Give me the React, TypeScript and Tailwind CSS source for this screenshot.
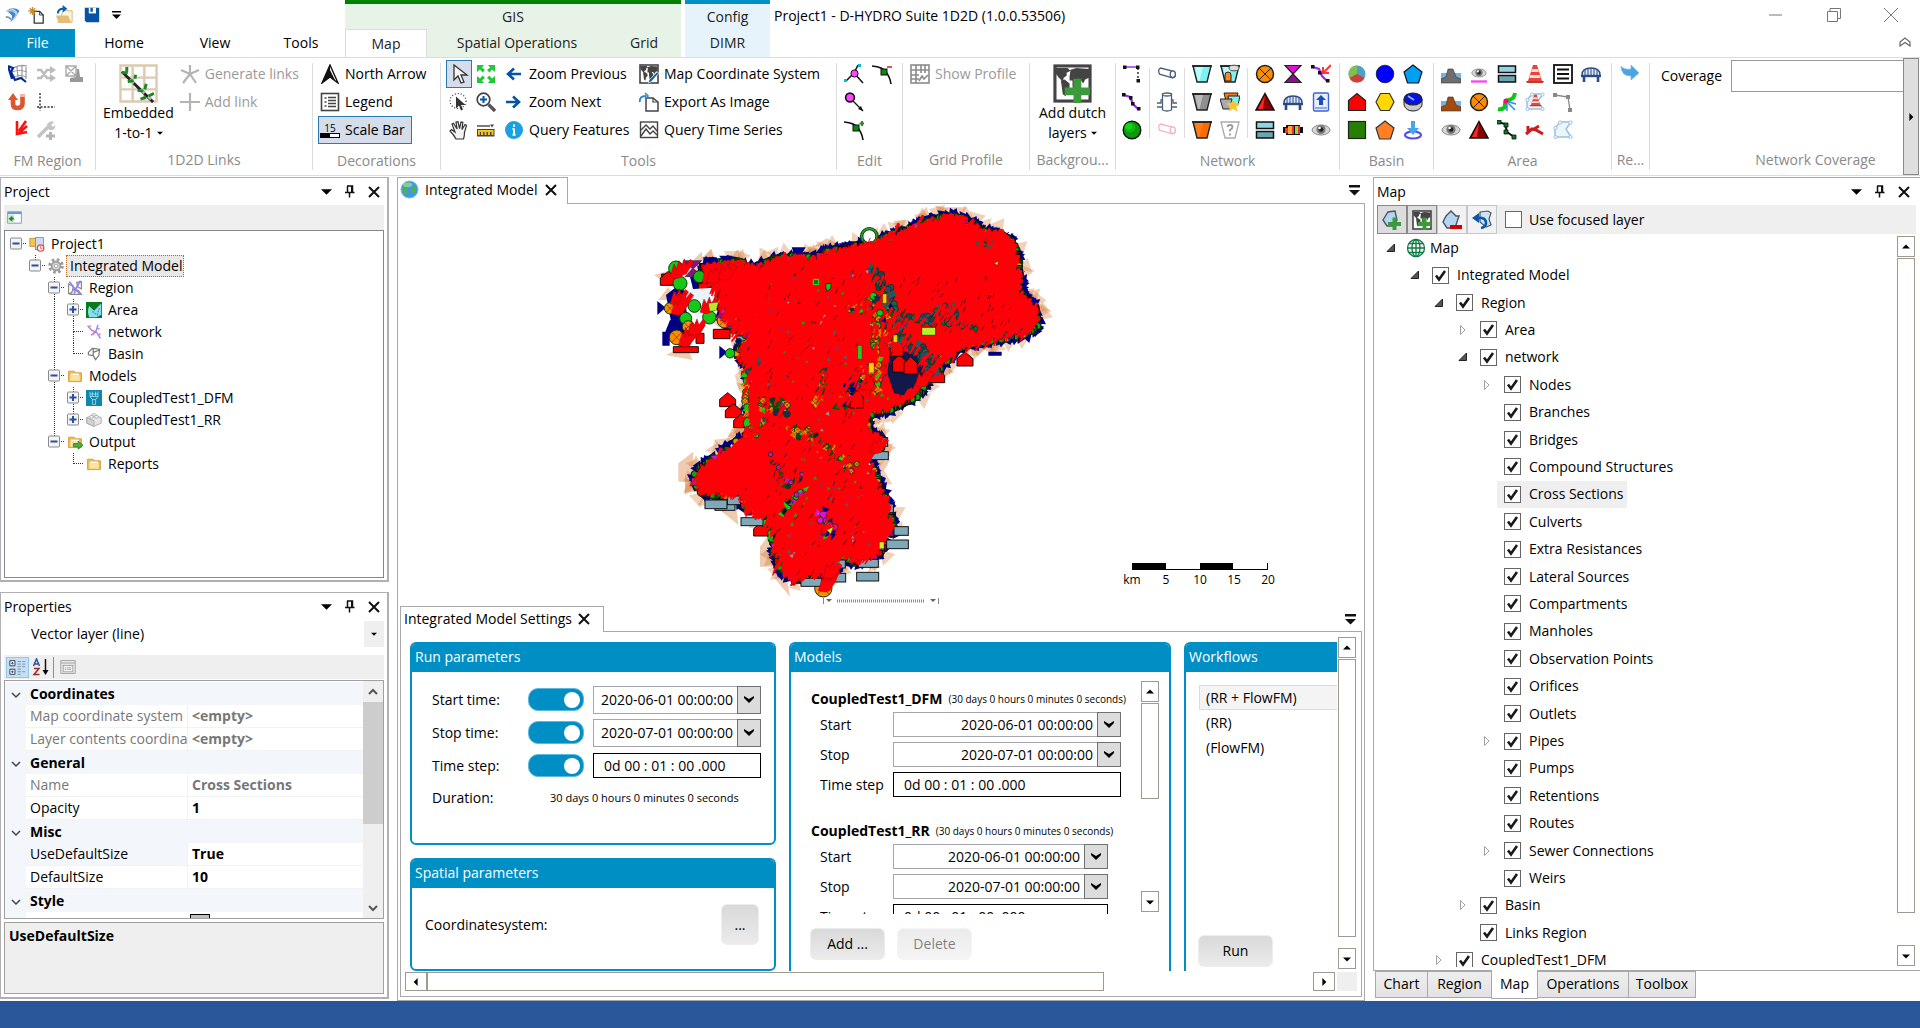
import React from "react";

/* ---------- Icons ---------- */

const eye = (
  <g>
    <ellipse cx="10" cy="10" rx="9" ry="5" fill="#d5d5d5" stroke="#8a8a8a" />
    <circle cx="10" cy="9.5" r="4.5" fill="#777" />
    <circle cx="10" cy="9.5" r="2.3" fill="#222" />
    <circle cx="8.6" cy="8" r="1.3" fill="#fff" />
  </g>
);
const bridge = (
  <g stroke="#2c4a86" fill="none">
    <path d="M1 11 Q1 4 10 4 Q19 4 19 11" fill="#dfe8f7" strokeWidth="1.4" />
    <path d="M4 6v5M7 5v6M10 4v7M13 5v6M16 6v5" />
    <path d="M0 12h20" strokeWidth="2.4" />
    <path d="M3 12v6M17 12v6" strokeWidth="2.6" />
  </g>
);
const orangeCircle = (
  <g stroke="#222">
    <circle cx="10" cy="10" r="8.5" fill="#ff8c00" strokeWidth="1.5" />
    <path d="M4 4l12 12M16 4L4 16" />
  </g>
);
const redTriangle = (
  <g>
    <path d="M10 1.5L19 18H1Z" fill="#8a0000" stroke="#111" strokeWidth="1.4" />
    <path d="M10 3L3 17h5Z" fill="#f22" />
  </g>
);
const weirs = (
  <g stroke="#111" strokeWidth="1.5">
    <rect x="1.5" y="2" width="17" height="6.5" fill="#8fd6e2" />
    <rect x="1.5" y="11.5" width="17" height="6.5" fill="#6ba6b4" />
  </g>
);
const worldMap = (
  <g>
    <rect x="1" y="1" width="18" height="18" fill="#fff" stroke="#444" strokeWidth="1.6" />
    <path d="M1.500 2l6 0 1.500 1.500-2 1 0 1.500-1.500 1-.5 2-2-2-1.500-2zM4 8.500l2-.5 2.500 2 0 2-1.500 1.500-.5 3-1.500-1-.5-4zM9 3l3-1 6.500.5 0 4.500-2 1-1 2-1.500-2-1 0-.5 1.500-2-1-2 0 0-2zM10 8.500l3 0 1.500 2-1.500 3-1 2.500-1.500-1-.5-4z" fill="#444" />
  </g>
);
const cone = (
  <g>
    <path d="M8 1h4l5 16H3Z" fill="#e5453b" />
    <path d="M7 5h6l.8 3H6.200zM5.300 11h9.400l.9 3H4.400z" fill="#fbdedb" />
    <path d="M1 17h18l-1 2H2z" fill="#c9342c" />
  </g>
);
const polyOutline = (
  <g>
    <path d="M2 17V8l5-6h11l-5 7 5 8z" fill="#edf5fc" stroke="#9dbfe0" strokeWidth="1.500" />
    <g fill="#fff" stroke="#9dbfe0">
      <circle cx="2.500" cy="17" r="1.600" /><circle cx="2.500" cy="8" r="1.600" /><circle cx="7" cy="2.500" r="1.600" /><circle cx="17.500" cy="2.500" r="1.600" /><circle cx="17.500" cy="17" r="1.600" />
    </g>
  </g>
);
const dike = (c: string) => (
  <g>
    <path d="M0 9h20v9H0z" fill="#7db0dc" />
    <path d="M0 19v-4l5-2 2-8h5l3 8 5 2v4z" fill={c} stroke="#333" strokeWidth=".6" />
  </g>
);
const bucket = (a: string, b: string) => (
  <g>
    <path d="M1 2h18l-4 16H5z" fill={b} stroke="#222" strokeWidth="1.4" />
    <path d="M3 3h8L7.500 17H6z" fill={a} opacity=".7" />
    <path d="M0 2h20" stroke="#222" strokeWidth="1.6" />
  </g>
);
const folder = (
  <g>
    <path d="M2 4h7l1 2h8v11H2z" fill="#f0bf4c" stroke="#c8922a" />
    <path d="M4 9h12v7H4z" fill="#fbe39c" />
    <path d="M5 8h10" stroke="#fff" strokeWidth="2" />
  </g>
);
const cursor = <path d="M5 1v15l4-4 3 7 3-1-3-7h6z" fill="#f5f5f5" stroke="#333" strokeWidth="1.3" />;
const plus = <path d="M10.500 7.500h4v4.500H19v4h-4.500v4h-4v-4H6v-4h4.500z" fill="#3c9a3c" />;
const edge = (
  <g>
    <path d="M0 2q11 1 14 6 4 5 5 12" fill="none" stroke="#111" strokeWidth="1.6" />
    <rect x="9" y="5" width="6" height="6" fill="#0a8a0a" stroke="#111" />
  </g>
);

const ICONS: Record<string, React.ReactNode> = {
  app: (
    <g>
      <path d="M3 5q8-5 14 0-2 7-10 13 4-7 0-9z" fill="#4a86c4" />
      <path d="M2 6q6-2 10 1t-2 8M6 3q8 1 9 7" stroke="#bcd7f0" strokeWidth="1.5" fill="none" />
      <path d="M2 12q4 0 6 3" stroke="#7f94a8" strokeWidth="2" fill="none" />
    </g>
  ),
  newDoc: (
    <g>
      <path d="M8 6h6l4 4v9H8z" fill="#fff" stroke="#333" strokeWidth="1.4" />
      <path d="M14 6v4h4" fill="none" stroke="#333" />
      <path d="M6 1v9M1.500 5.500h9M3 2.500l6 6M9 2.500l-6 6" stroke="#c98a2b" strokeWidth="1.4" />
    </g>
  ),
  open: (
    <g>
      <path d="M9 6h9v12H3z" fill="#fff5e0" stroke="#dfb46c" />
      <path d="M1 11h13l3 8H4z" fill="#e6bd78" />
      <path d="M3 9q0-5 6-5" fill="none" stroke="#0b5ea8" strokeWidth="2" />
      <path d="M8 0l5 4-5 4z" fill="#0b5ea8" />
    </g>
  ),
  save: (
    <g>
      <path d="M1 1h18v18H3l-2-2z" fill="#0554a3" />
      <path d="M6 1h9v7H6z" fill="#fff" />
      <path d="M8 1h3v5H8z" fill="#0554a3" />
    </g>
  ),
  globe: (
    <g>
      <circle cx="10" cy="10" r="9" fill="#3b9be0" stroke="#8fb8d8" />
      <path d="M3 5q5-5 8-2l-2 4-3 1 2 4-2 5q-5-5-3-12zM13 5q5 2 4 8l-3 2-2-5z" fill="#4fae5a" />
      <ellipse cx="8" cy="5" rx="5" ry="2.500" fill="#fff" opacity=".35" />
    </g>
  ),
  wireGlobe: (
    <g fill="none" stroke="#0c7a43" strokeWidth="1.3">
      <circle cx="10" cy="10" r="8.500" />
      <ellipse cx="10" cy="10" rx="4" ry="8.500" />
      <path d="M10 1.500v17M1.500 10h17M3 5.500h14M3 14.500h14" />
    </g>
  ),
  region: (
    <g fill="none">
      <path d="M5 4q7-4 14-2M4 8q7-3 15 0M6 13q6-3 12 0M9 3l1 11M14 2v12M18 3v12" stroke="#999" strokeWidth="1.200" />
      <path d="M0 2l5 2-2 4 4 8 6-2 5 4M0 2l4 13" stroke="#002a9c" strokeWidth="2.200" />
    </g>
  ),
  shuffle: (
    <g fill="none" stroke="#bcbcbc" strokeWidth="2.600">
      <path d="M1 6h4l6 8h5M1 14h4l6-8h5" />
      <path d="M14 2l6 4-6 4zM14 10l6 4-6 4z" fill="#bcbcbc" strokeWidth="0" />
    </g>
  ),
  imgStamp: (
    <g>
      <path d="M2 2h10v10H2zM2 2l10 10M12 2L2 12" stroke="#aaa" fill="none" strokeWidth="1.400" />
      <path d="M13 5h2l1 8h3v5H6v-4l6-1z" fill="#999" />
    </g>
  ),
  magnet: (
    <g>
      <path d="M5 7v5q0 4 4.500 4t5-4V3" fill="none" stroke="#df5530" strokeWidth="4.600" />
      <path d="M0 8l5-7 5 7z" fill="#df5530" />
      <path d="M12 2h5v3h-5z" fill="#f4b6a4" />
    </g>
  ),
  axes: (
    <g stroke="#333" fill="none" strokeWidth="1.400">
      <path d="M4 1v18" strokeDasharray="2 1.500" />
      <path d="M1 15h18" strokeDasharray="2 1.500" />
    </g>
  ),
  redArrow: (
    <path d="M18 1L11 11M19 6l-8 7M9 1l0 13 10-2" fill="none" stroke="#f11" strokeWidth="2.600" />
  ),
  wrench: (
    <g>
      <path d="M2 17L12 7" stroke="#c4c4c4" strokeWidth="3.600" />
      <path d="M11 4q4-4 7-2l-3 3 2 2 2-2q1 4-3 5-5 1-5-6z" fill="#c4c4c4" />
      <path d="M13 12h3v2.500h3v3h-3V20h-3v-2.500h-3v-3h3z" fill="#b5b5b5" />
    </g>
  ),
  links: (
    <path d="M10 10V1M10 10l9-4M10 10l6 9M10 10l-7 9M10 10L1 6" fill="none" stroke="#b4b4b4" strokeWidth="2.200" />
  ),
  addLink: <path d="M10 1v18M0 10h20" stroke="#b4b4b4" strokeWidth="2.200" fill="none" />,
  north: (
    <g>
      <path d="M10 1L18 19l-8-6-8 6z" fill="#fff" stroke="#111" strokeWidth="1.400" />
      <path d="M10 1v12l-8 6zM10 6l6 12-6-5z" fill="#111" />
    </g>
  ),
  legend: (
    <g>
      <rect x="1.500" y="1.500" width="17" height="17" fill="#fff" stroke="#444" strokeWidth="1.600" />
      <path d="M4.500 6h2M4.500 10h2M4.500 14h2M8 5.500h8M8 8.500h8M8 11.500h8M8 14.500h8" stroke="#444" strokeWidth="1.300" />
    </g>
  ),
  cursor,
  lasso: (
    <g>
      <ellipse cx="9" cy="9" rx="8" ry="7.500" fill="none" stroke="#333" strokeDasharray="1 2" strokeWidth="1.200" />
      <path d="M7 4.500v12l3-3 2 5 2-1-2-4.500h4.500z" fill="#333" />
    </g>
  ),
  hand: (
    <path
      d="M7 19q-2-4-6-8l1.500-1.500L6 12 3 4l1.500-.8L8 9 7 2l2-.3 1.500 7L12 2l1.800.3L13 9.500l3-5 1.500.8-2 7q0 4-1 6.700z"
      fill="#f4f4f4"
      stroke="#333"
      strokeWidth="1.200"
    />
  ),
  extent: (
    <path
      d="M1 1h7L6 3.500 9 6 6.500 8.500 4 5.500 1 8zM19 1v7l-3-2.500-2.500 3L11 6l3-2.500L12 1zM1 19v-7l3 2.500L6.500 11.500 9 14l-3 2.500L8 19zM19 19h-7l2-2.500L11 14l2.500-2.500 2.500 3 3-2.500z"
      fill="#22c73a"
    />
  ),
  zoomIn: (
    <g>
      <path d="M12.500 12.500L19 19" stroke="#555" strokeWidth="3.400" />
      <circle cx="7.500" cy="7.500" r="6.300" fill="#fff" stroke="#444" strokeWidth="1.700" />
      <path d="M7.500 4v7M4 7.500h7" stroke="#0554a3" strokeWidth="2" />
    </g>
  ),
  ruler: (
    <g>
      <path d="M1 6h13" stroke="#444" strokeWidth="1.400" />
      <path d="M14 4.500h4l-2 3z" fill="#444" />
      <rect x="1" y="9" width="17.500" height="7.500" fill="#444" />
      <path d="M2 10h15.500v5h-2v-3H14v3h-2v-3h-1.500v3h-2v-3H7v3H5v-3H3.800v3H2z" fill="#f4c51c" />
    </g>
  ),
  prev: <path d="M17 10H5M10 4.500L4 10l6 5.500" fill="none" stroke="#0554a3" strokeWidth="2.600" />,
  next: <path d="M2 10h12M9 4.500l6 5.500-6 5.500" fill="none" stroke="#0554a3" strokeWidth="2.600" />,
  info: (
    <g>
      <circle cx="10" cy="10" r="9" fill="#1ba1e2" />
      <path d="M10 8.500v6M10 4.500v2.200M8.500 9h1.500M8.500 14.800h3" stroke="#fff" strokeWidth="2" />
    </g>
  ),
  mapCoord: (
    <g>
      {worldMap}
      <path d="M20 9l-8 9-2.500 1 .5-3 8-8z" fill="#0e62ab" stroke="#fff" strokeWidth=".6" />
    </g>
  ),
  exportImg: (
    <g>
      <path d="M7 6h7l5 4v9H7z" fill="#fff" stroke="#444" strokeWidth="1.500" />
      <path d="M14 6v4h5" fill="none" stroke="#444" strokeWidth="1.200" />
      <path d="M1 10q-1-6 6-6" fill="none" stroke="#2c83c9" strokeWidth="1.800" />
      <path d="M6 1l3 3-3 3" fill="none" stroke="#2c83c9" strokeWidth="1.600" />
    </g>
  ),
  series: (
    <g fill="none" stroke="#444" strokeWidth="1.400">
      <rect x="1.500" y="2" width="17" height="15.500" />
      <path d="M2 10l5-5 4 4 3-3 4 5M2 16l5-7 4 5 3-3 4 4" />
    </g>
  ),
  editA: (
    <g>
      <path d="M2 17l8-8 4-8M10 9l9 10" stroke="#111" strokeWidth="1.500" fill="none" />
      <circle cx="10.500" cy="9.500" r="3.600" fill="#f4f" stroke="#111" />
      <path d="M14 0h3v3h-3zM0 15h3v3H0z" fill="#1bb" />
    </g>
  ),
  editB: (
    <g>
      <path d="M8 8l11 11" stroke="#111" strokeWidth="1.300" />
      <path d="M19 19l-5-2 3-3z" fill="#111" />
      <circle cx="6" cy="5.500" r="4.400" fill="#f4f" stroke="#111" strokeWidth="1.600" />
    </g>
  ),
  editC: (
    <g>
      {edge}
      <path d="M15.500 3.500h5M18 1v5" stroke="#2b8a2b" strokeWidth="2" />
    </g>
  ),
  editD: (
    <g>
      {edge}
      <path d="M15 3h5" stroke="#e22" strokeWidth="1.600" />
    </g>
  ),
  gridProfile: (
    <g fill="none" stroke="#8a8a8a" strokeWidth="1.600">
      <rect x="1" y="1" width="18" height="18" />
      <path d="M1 6h18M1 11h8M6 1v18M11 1v8M15 1v8M1 15h8" />
      <path d="M9 17l3-5 2 3 4-4" />
    </g>
  ),
  branchA: (
    <g>
      <path d="M2 3h13" stroke="#a83cf0" strokeWidth="1.600" />
      <path d="M16 4v13" stroke="#111" strokeDasharray="2 2" strokeWidth="1.300" />
      <path d="M1 1.500h3.500V5H1zM14 1.500h3.500V5H14zM14.500 15H18v3.500h-3.500z" fill="#111" />
    </g>
  ),
  branchB: (
    <g>
      <path d="M2 3l6 2 3 7 5 5" stroke="#9a2cf0" strokeWidth="2.200" fill="none" />
      <path d="M0 1h3.500v3.500H0zM7 4h3.500v3.500H7zM9 10h3.500v3.500H9zM15 15h3.500v3.500H15z" fill="#111" />
    </g>
  ),
  greenBall: (
    <g>
      <circle cx="10" cy="10" r="8.800" fill="#0a9a0a" stroke="#111" strokeWidth="1.400" />
      <ellipse cx="8" cy="7.500" rx="5.500" ry="5" fill="#12b812" />
      <ellipse cx="7" cy="6.500" rx="3.500" ry="3" fill="#16d416" />
    </g>
  ),
  pipe: (
    <g fill="#fff" stroke="#4a6078" strokeWidth="1.300">
      <path d="M3.500 4l12 3q4 2 2.500 5.500-1 1.500-3.500 1.200l-12-3.500q-2-5 1-6.200z" />
      <ellipse cx="15.800" cy="10.200" rx="2.600" ry="3.400" />
    </g>
  ),
  pipePink: (
    <g fill="#fff" stroke="#f9b4c4" strokeWidth="1.300">
      <path d="M3.500 4l12 3q4 2 2.500 5.500-1 1.500-3.500 1.200l-12-3.500q-2-5 1-6.200z" />
      <ellipse cx="15.800" cy="10.200" rx="2.600" ry="3.400" />
    </g>
  ),
  valve: (
    <g fill="#fff" stroke="#4a6078" strokeWidth="1.300">
      <path d="M5.500 2v16q4.500 2 9 0V2z" />
      <ellipse cx="10" cy="2.500" rx="4.500" ry="1.500" />
      <path d="M0 11h4V8h1.500M20 11h-4V8h-1.500M0 15h5.500M20 15h-5.500" />
    </g>
  ),
  bucketCyan: bucket("#d4ffff", "#7ef0f4"),
  bucketGray: bucket("#ccc", "#909090"),
  bucketOrange: bucket("#ff8a2a", "#ff6a00"),
  bucketDoor: (
    <g>
      {bucket("#d4ffff", "#7ef0f4")}
      <path d="M5 17v-6q0-3 3-3t3 3v6z" fill="#ff8a1c" stroke="#222" />
      <ellipse cx="14" cy="4" rx="5" ry="2.800" fill="#ddd" stroke="#555" />
    </g>
  ),
  bucketStar: (
    <g>
      <path d="M4 1h14l-2 8H6z" fill="#ff7a10" stroke="#222" />
      <path d="M8 4h12l-2 9H9z" fill="#7ef0f4" stroke="#222" />
      <path d="M0 7h12l-2 10H3z" fill="#aaa" stroke="#222" />
      <path d="M13 7l2 4 5 .6-3.600 3.200.9 4.700L13 17l-4.300 2.500.9-4.700L6 11.600l5-.6z" fill="#f6c533" />
    </g>
  ),
  bucketAsk: (
    <g>
      <path d="M1 2h18l-4 16H5z" fill="#fff" stroke="#aaa" strokeWidth="1.300" />
      <path d="M7.500 7q0-2 2.500-2t2.500 2q0 1.500-2.500 3v1.500M10 13.500v2" stroke="#999" strokeWidth="1.800" fill="none" />
    </g>
  ),
  pump: orangeCircle,
  redTri: redTriangle,
  weirs,
  orifice: (
    <g stroke="#222" strokeWidth="1.200">
      <path d="M2 1.500h16L10 10z" fill="#e010d8" />
      <path d="M10 10l8 8.500H2z" fill="#8c108c" />
    </g>
  ),
  bridge,
  battery: (
    <g>
      <path d="M0 7h3V5h14v2h3v6h-3v2H3v-2H0z" fill="#111" />
      <path d="M2 8h3v5H2zM9 6h2v8H9zM15 6h2v8h-2z" fill="#e8342c" />
      <path d="M5 6h4v8H5z" fill="#f8a63a" />
      <path d="M12 6h3v8h-3z" fill="#98d63c" />
    </g>
  ),
  branchRed: (
    <g>
      <path d="M2 3l6 2 3 7 5 5" stroke="#9a2cf0" strokeWidth="2.200" fill="none" />
      <path d="M0 1h3.500v3.500H0zM7 7h3.500v3.500H7zM15 15h3.500v3.500H15z" fill="#111" />
      <path d="M20 1l-7 7M12 3v6h6" stroke="#f33" strokeWidth="2" fill="none" />
    </g>
  ),
  gate: (
    <g>
      <rect x="2.500" y="1" width="15" height="18" rx="1.500" fill="#e6eefc" stroke="#3a64d8" strokeWidth="1.400" />
      <path d="M10 3l5 5h-3v5H8V8H5z" fill="#1a4fb8" />
      <path d="M4 16h12" stroke="#8fabe8" strokeWidth="2" />
    </g>
  ),
  eye,
  pie: (
    <g>
      <circle cx="10" cy="10" r="8.500" fill="#4f9fc8" />
      <path d="M10 10V1.500A8.500 8.500 0 0 0 2.500 14z" fill="#7cc24c" />
      <path d="M10 10L2.500 14A8.500 8.500 0 0 0 17.500 14z" fill="#cf3f37" />
    </g>
  ),
  house: <path d="M1.500 18.500V8.500L10 1.500l8.500 7v10z" fill="#f00" stroke="#222" strokeWidth="1.200" />,
  square: <rect x="1.500" y="1.500" width="17" height="17" fill="#267f00" stroke="#222" strokeWidth="1.200" />,
  blueBall: <circle cx="10" cy="10" r="8.800" fill="#0000fe" stroke="#113" strokeWidth=".8" />,
  hexagon: <path d="M5.500 1.500h9l4.500 8.500-4.500 8.500h-9L1 10z" fill="#ffd800" stroke="#333" strokeWidth="1.200" />,
  pentaOrange: <path d="M10 1l9 7-3.500 11h-11L1 8z" fill="#ff8024" stroke="#333" strokeWidth="1.200" />,
  pentaBlue: <path d="M10 1l9 7-3.500 11h-11L1 8z" fill="#00a0f0" stroke="#113" strokeWidth="1.200" />,
  drum: (
    <g>
      <path d="M1 7v6q2 6 9 6t9-6V7z" fill="#c9c9c9" stroke="#222" />
      <ellipse cx="10" cy="7" rx="9" ry="6" fill="#0612e0" stroke="#222" strokeWidth="1.200" />
      <path d="M5 4l6 4" stroke="#8fb4ff" strokeWidth="1.800" />
    </g>
  ),
  downDrop: (
    <g>
      <ellipse cx="10" cy="15" rx="8" ry="3.500" fill="none" stroke="#4d4df0" strokeWidth="2.200" />
      <path d="M8 1h4v7h4l-6 7-6-7h4z" fill="#49a4ea" />
    </g>
  ),
  dikeGray: dike("#6e6e6e"),
  dikeBrown: dike("#a34a10"),
  eyePink: (
    <g>
      <g transform="translate(2 1) scale(.8)">{eye}</g>
      <path d="M2 17.500h16" stroke="#f050f0" strokeWidth="2.400" />
    </g>
  ),
  greenRiver: (
    <g>
      <path d="M18 1q-1 6-6 7T8 15q-3 3-7 2" stroke="#12c412" strokeWidth="4" fill="none" />
      <circle cx="9" cy="9" r="2.600" fill="#f0106c" />
      <path d="M11 11l7 7M10 12v7M12 10l7 2" stroke="#2a8cf0" strokeWidth="1.500" />
    </g>
  ),
  branchGreen: (
    <g>
      <path d="M1 2l7 2 2 8 7 5" stroke="#111" strokeWidth="2" fill="none" />
      <path d="M0 0h4v4H0zM7 3h4v4H7zM7 10h4v4H7zM15 15h4v4h-4z" fill="#0b7a1c" stroke="#111" strokeWidth=".8" />
    </g>
  ),
  cone,
  coneArea: (
    <g>
      {polyOutline}
      <g transform="translate(4 2) scale(.65)">{cone}</g>
    </g>
  ),
  redPath: <path d="M1 14l6-5 4 1 7 4M3 6v5M9 9l5-3" stroke="#cf1b1b" strokeWidth="3" fill="none" />,
  lines: (
    <g>
      <rect x="1" y="1" width="18" height="18" fill="#fff" stroke="#111" strokeWidth="1.800" />
      <path d="M4 5.500h12M4 10h12M4 14.500h12" stroke="#111" strokeWidth="2" />
    </g>
  ),
  polyline: (
    <g>
      <path d="M2 3l13 2 2 13" stroke="#888" strokeWidth="1.300" fill="none" />
      <path d="M0 1h4v4H0zM13 3h4v4h-4zM15 16h4v4h-4z" fill="#888" />
    </g>
  ),
  polygon: polyOutline,
  reverse: (
    <path d="M1 2q3 4 10 3V1l8 8-8 7v-4Q1 12 1 2z" fill="#4ca5e0" stroke="#7cbce8" strokeWidth=".7" />
  ),
  project: (
    <g>
      <path d="M1 3h7l1 2h4v8H1z" fill="#f3c54e" stroke="#b98a22" />
      <rect x="8" y="2" width="10" height="15" fill="#cddcf2" stroke="#6c86b6" />
      <circle cx="14.500" cy="15" r="4" fill="#fff" stroke="#e04848" strokeWidth="1.600" />
      <path d="M14.500 12.500v3h2" stroke="#e04848" fill="none" />
    </g>
  ),
  gear: (
    <g>
      <circle cx="10" cy="10" r="8" fill="none" stroke="#9a9a9a" strokeWidth="3.500" strokeDasharray="3.300 2.980" />
      <circle cx="10" cy="10" r="5.500" fill="#d4d4d4" stroke="#9a9a9a" strokeWidth="2" />
      <circle cx="10" cy="10" r="2.200" fill="#fff" stroke="#9a9a9a" />
    </g>
  ),
  regionNet: (
    <g fill="none">
      <path d="M2 5l6 3-2 8-4 1zM12 3l6-1v9l-4-2zM8 12l6 1 4 5H4z" stroke="#8a8a8a" strokeWidth="1.500" />
      <path d="M3 2q5 8 14 16M17 1q-6 8-8 16" stroke="#8f7ff5" strokeWidth="2.200" />
    </g>
  ),
  area: (
    <g>
      <rect width="20" height="20" fill="#0a7a1a" />
      <path d="M4 5l6 6 9-9v14l-6 3H4q-3-7 0-14z" fill="#7fe3ee" />
      <path d="M8 12l6 4 3-9" stroke="#b04cd8" strokeDasharray="2 1.500" strokeWidth="1.500" fill="none" />
    </g>
  ),
  network: (
    <g fill="none">
      <path d="M2 2l5 6 6 2 5 8M15 1l-3 9M6 14l7-4" stroke="#8f7ff5" strokeWidth="1.600" />
      <path d="M3 4l3-2M10 10l-2 4M14 6h3M15 15l3-3" stroke="#f07aa8" strokeWidth="2" />
    </g>
  ),
  basin: (
    <path d="M3 8l5-5 9 1-1 8-4 5-3-5-6-1zM9 3v9M9 8l8-3" fill="none" stroke="#777" strokeWidth="1.500" />
  ),
  folder,
  folderOut: (
    <g>
      {folder}
      <path d="M8 12h6V9l6 5-6 5v-3H8z" fill="#4caf3c" stroke="#2a7a20" />
    </g>
  ),
  dfm: (
    <g>
      <rect width="20" height="20" fill="#0d87ab" />
      <path d="M5 2v6l3 4v6h4v-6l3-4V2M5 5h10M8 2v6M12 2v6M5 8h10M8 12h4" stroke="#a6e4f2" strokeWidth="1" fill="none" />
    </g>
  ),
  brick: (
    <g stroke="#a5a5a5">
      <path d="M1 7l9-4 9 4v7l-9 4-9-4z" fill="#e5e5e5" />
      <path d="M1 7l9 4v7l-9-4z" fill="#d2d2d2" />
      <ellipse cx="7" cy="6" rx="2.600" ry="1.500" fill="#fff" />
      <ellipse cx="13" cy="6" rx="2.600" ry="1.500" fill="#fff" />
      <ellipse cx="10" cy="3.500" rx="2.600" ry="1.500" fill="#fff" />
    </g>
  ),
  collapsePane: (
    <g>
      <rect x="1" y="2.500" width="18" height="15" fill="#fff" stroke="#5b7eb0" />
      <path d="M1 2.500h18v3H1z" fill="#6d9bd4" />
      <path d="M1.500 6h8v11h-8z" fill="#cfe8d0" />
      <path d="M2 11.500l5-4v8zM7 10h2v3H7z" fill="#1e8a35" />
    </g>
  ),
  categorized: (
    <g>
      <path d="M1 2h6v6H1zM1 12h6v6H1z" fill="#fff" stroke="#222" />
      <path d="M2.500 5h3M4 3.500v3M2.500 15h3M4 13.500v3" stroke="#2b52a4" strokeWidth="1.200" />
      <path d="M10 3h4M10 6h4M10 9h4M10 12h4M10 15h4M10 18h4M15.500 3h3.500M15.500 6h3.500M15.500 9h3.500M15.500 15h3.500" stroke="#77869c" />
    </g>
  ),
  propPages: (
    <g stroke="#9a9a9a" fill="#e4e4e4">
      <rect x="1" y="2" width="18" height="16" />
      <path d="M1 5h18" />
      <rect x="4" y="8" width="12" height="8" fill="#f5f5f5" />
      <path d="M6 11h2M6 13h2M9 11h5M9 13h5" />
    </g>
  ),
  shapeAdd: (
    <g>
      <path d="M1 10l5-8 7-1 2 9-4 6-6 0z" fill="#b3d6f2" stroke="#4a5560" strokeWidth="1.400" />
      {plus}
    </g>
  ),
  worldAdd: (
    <g>
      {worldMap}
      {plus}
    </g>
  ),
  shapeRemove: (
    <g>
      <path d="M4 6l5-5 5 5 3 0-4 12-8 0-4-6z" fill="#b3d6f2" stroke="#4a5560" strokeWidth="1.400" />
      <path d="M8 15h12v4H8z" fill="#d00000" />
    </g>
  ),
  shapeUndo: (
    <g>
      <path d="M8 2l8-1 3 2-2 6 2 6-5 2-6-5z" fill="#cfe4f5" stroke="#4a5560" strokeWidth="1.200" />
      <path d="M4 8h6q4 1 4 5 0 4-5 5" fill="none" stroke="#0b56a6" strokeWidth="2.600" />
      <path d="M0 8l7-5v10z" fill="#0b56a6" />
    </g>
  ),
};

function Icon({ name, className = "size-5" }: { name: string; className?: string }) {
  return (
    <svg viewBox="0 0 20 20" className={`shrink-0 ${className}`} aria-hidden="true">
      {ICONS[name]}
    </svg>
  );
}

function Tri({ dir, className = "size-2.5" }: { dir: "up" | "down" | "left" | "right"; className?: string }) {
  const d = { up: "M0 7L5 2l5 5z", down: "M0 3h10L5 8z", left: "M7 0L2 5l5 5z", right: "M3 0l5 5-5 5z" }[dir];
  return (
    <svg viewBox="0 0 10 10" className={`shrink-0 ${className}`} fill="#000" aria-hidden="true">
      <path d={d} />
    </svg>
  );
}

function Cross({ className = "size-3" }: { className?: string }) {
  return (
    <svg viewBox="0 0 12 12" className={`shrink-0 ${className}`} aria-hidden="true">
      <path d="M1 1l10 10M11 1L1 11" stroke="#111" strokeWidth="2" />
    </svg>
  );
}

function OverflowMark() {
  return (
    <svg viewBox="0 0 11 12" className="h-3 w-[11px]" aria-hidden="true">
      <path d="M0 1h11v2.500H0zM0 6h11L5.500 11.500z" fill="#111" />
    </svg>
  );
}

/* ---------- Ribbon ---------- */

function IconCell({ name }: { name: string }) {
  return (
    <button type="button" aria-label={name} className="flex size-7 items-center justify-center">
      <Icon name={name} />
    </button>
  );
}

function IconGrid({ columns }: { columns: string[][] }) {
  return (
    <div className="flex">
      {columns.map((col, i) => (
        <div key={i} className="flex flex-col">
          {col.map((n) => (
            <IconCell key={n} name={n} />
          ))}
        </div>
      ))}
    </div>
  );
}

function TextTool({ name, label, muted, active }: { name: string; label: string; muted?: boolean; active?: boolean }) {
  return (
    <button
      type="button"
      className={`flex h-7 items-center gap-[5px] border pr-1.5 pl-px ${active ? "border-[#2a7cb0] bg-[#d5dcea]" : "border-transparent"} ${muted ? "text-[#9a9a9a]" : ""}`}
    >
      {name === "scale" ? (
        <span className="flex w-5 flex-col items-center text-[10px] leading-[10px]">
          15
          <span className="flex h-[5px] w-5 border border-black bg-white">
            <span className="w-1/2 bg-black" />
          </span>
        </span>
      ) : (
        <Icon name={name} />
      )}
      {label}
    </button>
  );
}

function Group({ label, width, pad = "", children }: { label: string; width: string; pad?: string; children: React.ReactNode }) {
  return (
    <section className={`flex shrink-0 flex-col pt-0.5 ${width}`}>
      <div className={`flex h-[84px] ${pad}`}>{children}</div>
      <div className="flex h-8 items-center justify-center pt-0.5 text-[#8a8a8a]">{label}</div>
    </section>
  );
}

const Sep = () => <div className="my-[5px] w-px shrink-0 bg-[#dcdcdc]" />;
const InnerSep = () => <div className="mx-[3px] mt-2 h-[70px] w-px shrink-0 bg-[#dcdcdc]" />;

function EmbeddedIcon() {
  return (
    <svg viewBox="0 0 40 40" className="size-[39px]" aria-hidden="true">
      <path d="M1.500 1.500h37v37h-37zM14 1v38M26 1v38M1 14h38M1 26h38" fill="none" stroke="#dccbb0" strokeWidth="2.500" />
      <path d="M3 8L35 39" stroke="#222" strokeWidth="3" />
      <path d="M11 16l4 4M22 26l4 4M30 33l3 3" stroke="#bbb" strokeWidth="3" />
      <path d="M3 9l6 0M8 3v5M9 18l7-1 1-6M19 27l7 1 2-8M22 36l6-2 8-4" stroke="#178a24" strokeWidth="3" fill="none" strokeDasharray="6 3" />
    </svg>
  );
}

function Ribbon() {
  return (
    <div className="flex h-[119px] shrink-0 overflow-hidden border-t border-b border-[#dcdcdc] bg-white">
      <Group label="FM Region" width="w-[95px]" pad="pl-1">
        <IconGrid columns={[["region", "magnet", "redArrow"], ["shuffle", "axes", "wrench"], ["imgStamp"]]} />
      </Group>
      <Sep />
      <Group label="1D2D Links" width="w-[216px]" pad="pl-[7px]">
        <button type="button" className="flex flex-col items-center pt-1 leading-5">
          <EmbeddedIcon />
          <span>Embedded</span>
          <span className="flex items-center gap-1">
            1-to-1 <Tri dir="down" className="size-1.5" />
          </span>
        </button>
        <div className="flex flex-col pl-1">
          <TextTool name="links" label="Generate links" muted />
          <TextTool name="addLink" label="Add link" muted />
        </div>
      </Group>
      <Sep />
      <Group label="Decorations" width="w-[127px]" pad="pl-[5px]">
        <div className="flex flex-col items-start">
          <TextTool name="north" label="North Arrow" />
          <TextTool name="legend" label="Legend" />
          <TextTool name="scale" label="Scale Bar" active />
        </div>
      </Group>
      <Sep />
      <Group label="Tools" width="w-[395px]" pad="pl-[5px]">
        <div className="flex flex-col">
          <button type="button" aria-label="Select" aria-pressed="true" className="flex h-7 w-[26px] items-center justify-center border border-[#2a7cb0] bg-[#d5dcea]">
            <Icon name="cursor" />
          </button>
          <span className="flex w-[26px] flex-col items-center">
            <IconCell name="lasso" />
            <IconCell name="hand" />
          </span>
        </div>
        <IconGrid columns={[["extent", "zoomIn", "ruler"]]} />
        <div className="flex w-[137px] flex-col items-start pl-0.5">
          <TextTool name="prev" label="Zoom Previous" />
          <TextTool name="next" label="Zoom Next" />
          <TextTool name="info" label="Query Features" />
        </div>
        <div className="flex flex-col items-start">
          <TextTool name="mapCoord" label="Map Coordinate System" />
          <TextTool name="exportImg" label="Export As Image" />
          <TextTool name="series" label="Query Time Series" />
        </div>
      </Group>
      <Sep />
      <Group label="Edit" width="w-[65px]" pad="pl-[3px]">
        <IconGrid columns={[["editA", "editB", "editC"], ["editD"]]} />
      </Group>
      <Sep />
      <Group label="Grid Profile" width="w-[126px]" pad="pl-[5px]">
        <TextTool name="gridProfile" label="Show Profile" muted />
      </Group>
      <Sep />
      <Group label="Backgrou..." width="w-[85px]">
        <button type="button" className="flex w-full flex-col items-center pt-1 leading-5">
          <Icon name="worldAdd" className="size-[39px]" />
          <span>Add dutch</span>
          <span className="flex items-center gap-1">
            layers <Tri dir="down" className="size-1.5" />
          </span>
        </button>
      </Group>
      <Sep />
      <Group label="Network" width="w-[223px]" pad="pl-0.5">
        <IconGrid columns={[["branchA", "branchB", "greenBall"]]} />
        <InnerSep />
        <IconGrid columns={[["pipe", "valve", "pipePink"]]} />
        <InnerSep />
        <IconGrid columns={[["bucketCyan", "bucketGray", "bucketOrange"], ["bucketDoor", "bucketStar", "bucketAsk"]]} />
        <InnerSep />
        <IconGrid columns={[["pump", "redTri", "weirs"], ["orifice", "bridge", "battery"], ["branchRed", "gate", "eye"]]} />
      </Group>
      <Sep />
      <Group label="Basin" width="w-[93px]" pad="pl-[3px]">
        <IconGrid columns={[["pie", "house", "square"], ["blueBall", "hexagon", "pentaOrange"], ["pentaBlue", "drum", "downDrop"]]} />
      </Group>
      <Sep />
      <Group label="Area" width="w-[177px]" pad="pl-[3px]">
        <IconGrid
          columns={[
            ["dikeGray", "dikeBrown", "eye"],
            ["eyePink", "pump", "redTri"],
            ["weirs", "greenRiver", "branchGreen"],
            ["cone", "coneArea", "redPath"],
            ["lines", "polyline", "polygon"],
            ["bridge"],
          ]}
        />
      </Group>
      <Sep />
      <Group label="Re..." width="w-[37px]" pad="pl-1">
        <IconGrid columns={[["reverse"]]} />
      </Group>
      <Sep />
      <section className="flex min-w-0 flex-1 flex-col pt-0.5">
        <div className="flex h-[84px] items-start pl-[11px]">
          <label htmlFor="coverage" className="w-[70px] pt-1.5">
            Coverage
          </label>
          <input id="coverage" className="h-8 min-w-0 flex-1 border border-r-0 border-[#9a9a9a] bg-white px-1" />
        </div>
        <div className="flex h-8 items-center justify-center pt-0.5 pl-[78px] text-[#8a8a8a]">Network Coverage</div>
      </section>
      <button type="button" aria-label="Scroll ribbon" className="mr-px flex w-4 shrink-0 items-center justify-center border border-[#8a8a8a] bg-[#dedede]">
        <Tri dir="right" className="size-2" />
      </button>
    </div>
  );
}

function TitleBar() {
  const quick = "flex items-center justify-center";
  return (
    <header className="flex h-[57px] shrink-0 bg-white">
      <div className="flex w-[345px] shrink-0 flex-col">
        <div className="flex h-[29px] items-center pl-1">
          <button type="button" aria-label="Application" className={`${quick} w-[18px]`}><Icon name="app" className="size-[18px]" /></button>
          <button type="button" aria-label="New" className={`${quick} w-7`}><Icon name="newDoc" className="size-[18px]" /></button>
          <button type="button" aria-label="Open" className={`${quick} w-7`}><Icon name="open" className="size-[19px]" /></button>
          <button type="button" aria-label="Save" className={`${quick} w-7`}><Icon name="save" className="size-4" /></button>
          <button type="button" aria-label="Customize" className={`${quick} w-5`}><svg viewBox="0 0 9 8" className="h-2 w-[9px]" aria-hidden="true"><path d="M0 0h9v1.500H0zM0 3.500h9L4.500 8z" /></svg></button>
        </div>
        <nav className="flex h-7 items-center">
          <button type="button" className="h-full w-[75px] bg-[#008fc5] text-white">File</button>
          <button type="button" className="w-[98px]">Home</button>
          <button type="button" className="w-[84px]">View</button>
          <button type="button" className="w-[88px]">Tools</button>
        </nav>
      </div>
      <div className="flex w-[336px] shrink-0 flex-col border-t-4 border-[#008000] bg-[#e8f3e8] text-[#222]">
        <div className="flex h-[25px] items-center justify-center">GIS</div>
        <nav className="flex h-7 shrink-0 items-center">
          <button type="button" className="-mb-px h-[29px] w-[82px] border border-b-0 border-[#dcdcdc] bg-white">Map</button>
          <button type="button" className="w-[180px]">Spatial Operations</button>
          <button type="button" className="flex-1">Grid</button>
        </nav>
      </div>
      <div className="ml-1 flex w-[85px] shrink-0 flex-col border-t-4 border-[#0090c8] bg-[#e6f3fa] text-[#222]">
        <div className="flex h-[25px] items-center justify-center">Config</div>
        <button type="button" className="h-7">DIMR</button>
      </div>
      <h1 className="pt-1.5 pl-1">Project1 - D-HYDRO Suite 1D2D (1.0.0.53506)</h1>
      <div className="ml-auto flex w-[156px] flex-col items-end">
        <div className="flex h-[29px] w-full items-center justify-between pr-[22px] pl-[5px]">
          <button type="button" aria-label="Minimize"><svg viewBox="0 0 14 14" className="size-3.5"><path d="M0 7h13" stroke="#777" /></svg></button>
          <button type="button" aria-label="Restore"><svg viewBox="0 0 14 14" className="size-3.5" fill="none" stroke="#777"><path d="M.5 3.500h10v10h-10zM3 3.500v-3h10.500v10h-3" /></svg></button>
          <button type="button" aria-label="Close"><svg viewBox="0 0 14 14" className="size-3.5"><path d="M0 0l14 14M14 0L0 14" stroke="#777" /></svg></button>
        </div>
        <button type="button" aria-label="Collapse ribbon" className="mt-2 mr-[9px]"><svg viewBox="0 0 12 10" className="h-2.5 w-3" fill="none" stroke="#666" strokeWidth="1.200"><path d="M1 5l5-4 5 4v4L6 5.500 1 9z" /></svg></button>
      </div>
    </header>
  );
}

/* ---------- Shared panel pieces ---------- */

function PanelHeader({ title, pad = "pr-[7px]" }: { title: string; pad?: string }) {
  return (
    <div className={`flex h-[27px] shrink-0 items-center pl-[3px] ${pad}`}>
      <h2 className="flex-1">{title}</h2>
      <button type="button" aria-label="Panel menu" className="mr-[13px]"><Tri dir="down" className="size-[11px]" /></button>
      <button type="button" aria-label="Pin" className="mr-[13px]">
        <svg viewBox="0 0 10 13" className="h-[13px] w-2.5"><path d="M2 1h5.500v6M2.500 1v6M0 7.500h9.500M4.500 8v4.500" fill="none" stroke="#111" strokeWidth="1.500" /><path d="M6 1h2v6H6z" fill="#111" /></svg>
      </button>
      <button type="button" aria-label="Close panel"><Cross /></button>
    </div>
  );
}

function VScroll({ className, thumb }: { className: string; thumb: string }) {
  return (
    <div className={`flex w-[18px] shrink-0 flex-col bg-white ${className}`}>
      <button type="button" aria-label="Scroll up" className="flex h-[21px] shrink-0 items-center justify-center border border-[#9f9a90]"><Tri dir="up" className="size-2" /></button>
      <div className={`mt-px border border-[#9f9a90] ${thumb}`} />
      <button type="button" aria-label="Scroll down" className="mt-auto flex h-[21px] shrink-0 items-center justify-center border border-[#9f9a90]"><Tri dir="down" className="size-2" /></button>
    </div>
  );
}

/* ---------- Project panel ---------- */

type ProjectNode = { label: string; icon: string; depth: number; exp?: "+" | "-"; last?: boolean; guides: boolean[]; selected?: boolean };

const PROJECT: ProjectNode[] = [
  { label: "Project1", icon: "project", depth: 0, exp: "-", last: true, guides: [] },
  { label: "Integrated Model", icon: "gear", depth: 1, exp: "-", last: true, guides: [false], selected: true },
  { label: "Region", icon: "regionNet", depth: 2, exp: "-", guides: [false, false] },
  { label: "Area", icon: "area", depth: 3, exp: "+", guides: [false, false, true] },
  { label: "network", icon: "network", depth: 3, guides: [false, false, true] },
  { label: "Basin", icon: "basin", depth: 3, last: true, guides: [false, false, true] },
  { label: "Models", icon: "folder", depth: 2, exp: "-", guides: [false, false] },
  { label: "CoupledTest1_DFM", icon: "dfm", depth: 3, exp: "+", guides: [false, false, true] },
  { label: "CoupledTest1_RR", icon: "brick", depth: 3, exp: "+", last: true, guides: [false, false, true] },
  { label: "Output", icon: "folderOut", depth: 2, exp: "-", last: true, guides: [false, false] },
  { label: "Reports", icon: "folder", depth: 3, last: true, guides: [false, false, false] },
];

function ProjectRow({ node }: { node: ProjectNode }) {
  return (
    <li className="flex h-[22px] items-center">
      {node.guides.map((on, i) => (
        <svg key={i} viewBox="0 0 19 22" className="h-[22px] w-[19px] shrink-0">
          {on && <path d="M9.500 0v22" stroke="#333" strokeDasharray="1 1" />}
        </svg>
      ))}
      <svg viewBox="0 0 19 22" className="h-[22px] w-[19px] shrink-0">
        {node.depth > 0 && <path d="M9.500 0v11" stroke="#333" strokeDasharray="1 1" />}
        {!node.last && <path d="M9.500 11v11" stroke="#333" strokeDasharray="1 1" />}
        <path d="M10 10.500h9" stroke="#333" strokeDasharray="1 1" />
        {node.exp && (
          <g>
            <rect x="3.500" y="5" width="11" height="11" rx="1" fill="#f4f4f4" stroke="#8a8a8a" />
            <path d={node.exp === "+" ? "M5.500 10.500h7M9 7v7" : "M5.500 10.500h7"} stroke="#2b4fa0" strokeWidth="2" />
          </g>
        )}
      </svg>
      <Icon name={node.icon} className="ml-[3px] size-4" />
      <span className={node.selected ? "ml-0.5 border border-dotted border-[#b36b20] bg-[#e8e8e8] pr-px pl-[3px] leading-5" : "ml-1.5"}>{node.label}</span>
    </li>
  );
}

function ProjectPanel() {
  return (
    <section className="flex min-h-0 flex-1 flex-col border border-[#b0b0b0] border-r-2 border-b-2 bg-white">
      <PanelHeader title="Project" />
      <div className="mx-[3px] flex h-[25px] shrink-0 items-center bg-[#efefef] pl-[3px]">
        <button type="button" aria-label="Collapse all"><Icon name="collapsePane" className="size-[15px]" /></button>
      </div>
      <ul className="mx-[3px] mb-0.5 min-h-0 flex-1 border border-[#828790] pt-0.5 pl-0.5">
        {PROJECT.map((n) => <ProjectRow key={n.label} node={n} />)}
      </ul>
    </section>
  );
}

/* ---------- Properties panel ---------- */

type Prop = { name: string; value?: string; muted?: boolean; selected?: boolean };
const PROPS: Prop[] = [
  { name: "Coordinates" },
  { name: "Map coordinate system", value: "<empty>", muted: true },
  { name: "Layer contents coordinate system", value: "<empty>", muted: true },
  { name: "General" },
  { name: "Name", value: "Cross Sections", muted: true },
  { name: "Opacity", value: "1" },
  { name: "Misc" },
  { name: "UseDefaultSize", value: "True", selected: true },
  { name: "DefaultSize", value: "10" },
  { name: "Style" },
];

function PropertiesPanel() {
  return (
    <section className="flex h-[407px] shrink-0 flex-col border border-[#b0b0b0] border-r-2 border-b-2 bg-white">
      <PanelHeader title="Properties" />
      <div className="mr-[3px] mb-[7px] flex h-[28px] shrink-0 items-center pl-[30px]">
        <span className="flex-1">Vector layer (line)</span>
        <button type="button" aria-label="Choose object" className="flex h-[26px] w-5 items-center justify-center bg-[#efefef]"><Tri dir="down" className="size-1.5" /></button>
      </div>
      <div className="mx-[3px] mb-px flex h-6 shrink-0 items-center bg-[#efefef] pl-[2px]">
        <button type="button" aria-label="Categorized" className="flex h-[21px] w-[23px] items-center justify-center border border-[#90c8f0] bg-[#c5e0f5]"><Icon name="categorized" className="size-[17px]" /></button>
        <button type="button" aria-label="Alphabetical" className="flex w-6 items-center justify-center">
          <svg viewBox="0 0 18 18" className="size-[18px]" aria-hidden="true">
            <path d="M1.500 8L4.500 1l3 7M2.500 6h4" fill="none" stroke="#2b52a4" strokeWidth="1.500" />
            <path d="M2 10.500h5L2 16.500h5.500" fill="none" stroke="#9a2a2a" strokeWidth="1.500" />
            <path d="M13.500 1v13" stroke="#111" strokeWidth="1.500" />
            <path d="M10.500 12h6l-3 5z" />
          </svg>
        </button>
        <span className="mr-1.5 h-[21px] w-px bg-[#909090]" />
        <button type="button" aria-label="Property pages"><Icon name="propPages" className="size-4" /></button>
      </div>
      <div className="mx-[3px] flex h-[239px] shrink-0 overflow-hidden border border-[#a0a0a0]">
        <div className="min-w-0 flex-1 overflow-hidden pt-px">
          <table className="w-full table-fixed border-separate border-spacing-0">
            <colgroup><col className="w-[21px]" /><col className="w-[162px]" /><col /></colgroup>
            <tbody>
              {PROPS.map((p) =>
                p.value === undefined ? (
                  <tr key={p.name} className="h-[23px] bg-[#f3f7fc]">
                    <td className="p-0 text-center leading-4"><svg viewBox="0 0 10 8" className="inline h-2 w-2.5"><path d="M1 2l4 4 4-4" fill="none" stroke="#444" strokeWidth="1.500" /></svg></td>
                    <th colSpan={2} className="p-0 pl-1 text-left font-bold">{p.name}</th>
                  </tr>
                ) : (
                  <tr key={p.name} className={`h-[23px] ${p.muted ? "text-[#777]" : ""}`}>
                    <td className="bg-[#f3f7fc] p-0" />
                    <td className={`overflow-hidden border-r border-b border-[#f0f2f6] p-0 pl-1 ${p.selected ? "bg-[#f3f7fc]" : ""}`}>{p.name}</td>
                    <td className="border-b border-[#f0f2f6] p-0 pl-1 font-bold">{p.value}</td>
                  </tr>
                ),
              )}
              <tr className="h-[23px]"><td className="bg-[#f3f7fc] p-0" /><td className="p-0" /><td className="p-0 pt-0.5 pl-0.5 align-top"><span className="block h-5 w-5 border border-black bg-[#c0c0c0]" /></td></tr>
            </tbody>
          </table>
        </div>
        <div className="flex w-5 shrink-0 flex-col bg-[#efefef]">
          <button type="button" aria-label="Scroll up" className="flex h-[21px] items-center justify-center"><svg viewBox="0 0 10 8" className="h-2 w-2.5"><path d="M1 6l4-4 4 4" fill="none" stroke="#555" strokeWidth="2" /></svg></button>
          <div className="h-[122px] bg-[#cdcdcd]" />
          <button type="button" aria-label="Scroll down" className="mt-auto flex h-[21px] items-center justify-center"><svg viewBox="0 0 10 8" className="h-2 w-2.5"><path d="M1 2l4 4 4-4" fill="none" stroke="#555" strokeWidth="2" /></svg></button>
        </div>
      </div>
      <div className="mx-[3px] mt-[3px] mb-[3px] min-h-0 flex-1 border border-[#a0a0a0] bg-[#efefef] px-1 pt-[3px] font-bold">UseDefaultSize</div>
    </section>
  );
}

/* ---------- Map drawing ---------- */

function makeRandom(seed: number) {
  let s = seed;
  return () => {
    s = (s * 1664525 + 1013904223) % 4294967296;
    return s / 4294967296;
  };
}

const BODY: [number, number][] = [
  [200, 200], [290, 195], [340, 212], [400, 190], [480, 175], [520, 186], [565, 163], [640, 152], [720, 130], [800, 100],
  [860, 76], [930, 56], [985, 74], [1025, 104], [1075, 108], [1115, 136], [1124, 180], [1132, 230], [1138, 292], [1178, 324],
  [1185, 370], [1160, 393], [1090, 405], [1000, 422], [945, 440], [900, 490], [860, 535], [825, 580], [790, 598], [745, 620],
  [690, 630], [672, 670], [684, 710], [720, 726], [682, 780], [704, 850], [736, 910], [750, 990], [725, 1035], [704, 1064],
  [660, 1080], [605, 1062], [575, 1110], [480, 1130], [443, 1118], [418, 1078], [405, 1008], [388, 955], [325, 926], [305, 882],
  [215, 877], [180, 865], [175, 818], [240, 774], [325, 712], [350, 690], [335, 640], [335, 540], [345, 488], [300, 470],
  [336, 400], [268, 365], [236, 285], [198, 240],
];

type Shape = { d: string; fill: string; stroke?: string; w?: number; o?: number };

function buildMap() {
  const r = makeRandom(11);
  const spots: Shape[] = [];
  const wedges: string[] = [];
  const circle = (x: number, y: number, q: number) => `M${(x - q).toFixed(0)} ${y.toFixed(0)}a${q} ${q} 0 1 0 ${2 * q} 0a${q} ${q} 0 1 0 ${-2 * q} 0`;
  const box = (x: number, y: number, w: number, h: number) => `M${x.toFixed(0)} ${y.toFixed(0)}h${w}v${h}h${-w}z`;
  const tri = (x: number, y: number, q: number) => {
    const a = r() * 6.28;
    return [0, 2.1, 4.2].map((b, i) => `${i ? "L" : "M"}${(x + q * Math.cos(a + b)).toFixed(0)} ${(y + q * Math.sin(a + b)).toFixed(0)}`).join("") + "z";
  };
  const wedge = (x: number, y: number, len: number) => {
    const a = -1.05 + (r() - 0.5) * 0.45;
    const c = Math.cos(a);
    const s = Math.sin(a);
    const p = (u: number, v: number) => `${(x + u * c - v * s).toFixed(0)} ${(y + u * s + v * c).toFixed(0)}`;
    wedges.push(`M${p(-len / 2, -2)}L${p(len / 2 - 4, -5)}L${p(len / 2, 0)}L${p(len / 2 - 4, 5)}L${p(-len / 2, 2)}z`);
  };
  const hatch = (x: number, y: number, len: number) => {
    const a = -1.05 + (r() - 0.5) * 0.5;
    spots.push({ d: `M${x.toFixed(0)} ${y.toFixed(0)}l${(len * Math.cos(a)).toFixed(0)} ${(len * Math.sin(a)).toFixed(0)}`, fill: "none", stroke: "#2a0505", w: 2 });
  };
  const peach: Shape[] = [];
  const navy: Shape[] = [];
  const rim: Shape[] = [];
  BODY.forEach((p, i) => {
    const q = BODY[(i + 1) % BODY.length];
    const dx = q[0] - p[0];
    const dy = q[1] - p[1];
    const len = Math.hypot(dx, dy);
    const nx = dy / len;
    const ny = -dx / len;
    for (let t = 0; t < len; t += 4) {
      const x = p[0] + (dx * t) / len;
      const y = p[1] + (dy * t) / len;
      const at = (k: number): [number, number] => [x + nx * k, y + ny * k];
      if (r() < 0.12) peach.push({ d: tri(...at(30), 20 + r() * 10), fill: "#d87a34", o: 0.35 });
      if (r() < 0.34) navy.push({ d: tri(...at(14 + r() * 8), 16), fill: "#000084" });
      if (r() < 0.26) rim.push({ d: circle(...at(8 + r() * 5), 10), fill: r() < 0.25 ? "#ff8c00" : "#16a016", stroke: "#0b3008", w: 4 });
      if (r() < 0.2) {
        const [bx, by] = at(9);
        rim.push({ d: box(bx - 9, by - 9, 18, 18), fill: ["#1d6a10", "#c30fc3", "#e00000", "#7b127b"][Math.floor(r() * 4)], stroke: "#000", w: 3 });
      }
      if (r() < 0.2) {
        const [hx, hy] = at(-4 + r() * 12);
        hatch(hx, hy, 14 + r() * 12);
      }
      if (r() < 0.85) wedge(...at(-10 + r() * 14), 28 + r() * 18);
    }
  });

  const cluster = (pts: [number, number][], spread: number, n: number, colours: string[], size = 8, cover = 0.45) => {
    pts.slice(0, -1).forEach((p, i) => {
      const q = pts[i + 1];
      for (let k = 0; k < n; k++) {
        const t = k / n;
        const x = p[0] + (q[0] - p[0]) * t + (r() - 0.5) * spread;
        const y = p[1] + (q[1] - p[1]) * t + (r() - 0.5) * spread;
        const fill = colours[Math.floor(r() * colours.length)];
        spots.push(r() < 0.5 ? { d: tri(x, y, size + 4), fill } : { d: circle(x, y, size), fill, stroke: "#143c0c", w: 3 });
        if (fill === "#ff8c00") spots.push({ d: `M${(x - size).toFixed(0)} ${(y - size).toFixed(0)}l${2 * size} ${2 * size}m0 ${-2 * size}l${-2 * size} ${2 * size}`, fill: "none", stroke: "#442200", w: 1.5 });
        if (r() < cover) wedge(x + (r() - 0.5) * 40, y + (r() - 0.5) * 40, 36);
      }
    });
  };
  const slate = ["#2e4668", "#34506e", "#223a5c", "#1c6050"];
  const mix = ["#ff8c00", "#18c818", "#12500c", "#1a2a4a", "#ff8c00"];
  cluster([[700, 205], [740, 270], [765, 370], [795, 420], [850, 465], [885, 515]], 30, 20, slate, 10, 0.3);
  cluster([[800, 360], [860, 358], [920, 350], [960, 375]], 30, 13, slate, 9);
  cluster([[890, 330], [935, 320], [960, 370], [1010, 380]], 16, 8, slate, 7);
  cluster([[900, 480], [950, 445], [990, 425], [1060, 408], [1180, 395]], 20, 12, ["#2e4668", "#1b3660", "#2e4668", "#ffd000"], 9, 0.35);
  cluster([[715, 340], [710, 420], [712, 500], [705, 590]], 18, 11, ["#ff8c00", "#ff8c00", "#18c818", "#ff8c00"], 10, 0.3);
  cluster([[740, 330], [745, 400], [760, 440]], 26, 10, ["#000084", "#ff8c00", "#12500c", "#2e4668"], 10, 0.4);
  cluster([[318, 520], [318, 580], [318, 650]], 8, 8, ["#ff8c00", "#ff8c00", "#18c818"], 10, 0.15);
  cluster([[345, 490], [330, 530]], 24, 12, slate, 8);
  cluster([[360, 610], [400, 615], [440, 630]], 34, 11, mix, 10);
  cluster([[530, 610], [548, 550], [556, 510]], 16, 9, mix, 10);
  cluster([[600, 610], [630, 570], [650, 540], [690, 500]], 30, 9, ["#000084", "#ff8c00", "#12500c", "#000084"], 10);
  cluster([[630, 330], [680, 320], [715, 285]], 24, 11, mix, 11, 0.6);
  cluster([[370, 655], [345, 690], [320, 715]], 20, 9, ["#ff8c00", "#2e4668", "#18c818"], 9);
  cluster([[450, 680], [480, 710], [515, 690]], 14, 8, ["#18c818", "#12500c", "#ff8c00"], 9);
  cluster([[500, 700], [560, 740], [610, 780], [640, 810]], 30, 9, mix, 8);
  cluster([[400, 770], [440, 860], [500, 820]], 16, 7, ["#12500c", "#c810c8", "#1a2a4a"], 7);
  cluster([[430, 940], [450, 900], [510, 870]], 14, 9, ["#18c818", "#c810c8", "#111"], 8);
  cluster([[540, 940], [570, 980], [560, 1010]], 28, 11, ["#000084", "#18c818", "#e010d8"], 10);
  cluster([[335, 210], [400, 190], [480, 172]], 10, 10, ["#e010d8", "#b010b0", "#111"], 7, 0.6);
  cluster([[735, 120], [790, 100], [860, 72]], 14, 9, ["#e010d8", "#18c818", "#111"], 9, 0.5);
  cluster([[245, 330], [300, 390], [320, 440]], 30, 11, ["#8c108c", "#000084", "#ff8c00", "#e010d8"], 9, 0.6);
  cluster([[1020, 125], [1060, 135]], 16, 6, ["#1c6050", "#111"], 6);
  cluster([[395, 1000], [420, 1090], [470, 1140]], 16, 9, ["#18c818", "#12500c", "#e010d8", "#111"], 9, 0.6);
  cluster([[160, 850], [200, 790], [270, 750]], 12, 9, ["#18c818", "#12500c", "#e010d8", "#111"], 8, 0.7);
  for (let k = 0; k < 320; k++) {
    const x = 340 + r() * 420;
    const y = 200 + r() * 870;
    if (x + y > 640 && (y < 600 || (x > 380 && x < 690))) {
      if (r() < 0.55) spots.push({ d: tri(x, y, 3 + r() * 5), fill: ["#44606e", "#7a2410", "#18a018", "#7b3080", "#8c9aa4"][Math.floor(r() * 5)] });
      else hatch(x, y, 10 + r() * 12);
    }
  }
  for (let k = 0; k < 50; k++) hatch(780 + r() * 330, 230 + r() * 190, 8 + r() * 10);
  for (let k = 0; k < 260; k++) wedge(350 + r() * 360, 230 + r() * 380, 34);
  return { under: [...peach, ...navy, ...rim], spots, wedges: wedges.join("") };
}

const MAP = buildMap();
const BODY_PATH = "M" + BODY.map((p) => p.join(" ")).join("L") + "Z";
const STRUCTURES = [
  [225, 905, 60, 26], [262, 888, 40, 26], [195, 900, 66, 26], [303, 953, 66, 24], [705, 713, 38, 26], [690, 755, 55, 24], [290, 408, 42, 24],
  [740, 912, 20, 26], [762, 980, 43, 26], [740, 1020, 65, 26], [580, 1080, 36, 24], [555, 1120, 62, 26], [483, 1135, 62, 24],
  [655, 1078, 60, 24], [650, 1117, 66, 26],
];
const BALLS: [number, number, number, string][] = [
  [108, 205, 22, "#18c818"], [178, 230, 18, "#18b818"], [120, 250, 21, "#18c818"], [137, 355, 18, "#18c818"], [90, 325, 17, "#ff8c00"],
  [110, 412, 22, "#ff8c00"], [145, 380, 18, "#ff8c00"], [163, 318, 19, "#18c818"], [208, 352, 20, "#18c818"], [255, 360, 24, "#ff8c00"],
  [270, 460, 14, "#18c818"], [330, 670, 20, "#18c818"], [375, 970, 12, "#18c818"], [550, 1165, 26, "#ff8c00"],
];
const HOUSES = [[263, 602], [280, 635], [85, 238], [305, 665], [365, 990], [975, 480], [890, 530]];
const INNER_HOUSES = [[778, 492], [812, 498], [770, 445], [680, 545], [650, 600]];
const TUFTS = [[115, 210], [130, 200], [115, 290], [130, 300], [118, 320], [150, 400], [165, 390], [140, 415], [205, 315], [570, 1130], [560, 1150], [575, 1110], [168, 380], [715, 735], [850, 535], [225, 225], [260, 215]];

function MapDrawing() {
  return (
    <svg viewBox="0 12 1260 1182" className="absolute top-0 left-1/4 h-[394px] w-[420px]" role="img" aria-label="Integrated model map">
      <g fill="#d87a34" opacity=".4">
        <path d="M42 225l40-12-10 32zM55 300l30-40 20 40zM78 465l60-30 20 45zM115 790l45-35-5 90h-40zM360 1040l30-40 15 100h-45zM400 1130l40 0 10 60zM520 140l40-25 40 20zM825 55l35-35 10 35zM890 22h90l-25 40-45-20zM1150 260l35 30-35 10zM700 790l50-10-35 60zM270 180l20-30 30 40zM160 180l25-25 5 30zM240 930l55 45-5-45z" />
      </g>
      {MAP.under.map((s, i) => (
        <path key={i} d={s.d} fill={s.fill} stroke={s.stroke} strokeWidth={s.w} opacity={s.o} />
      ))}
      <g fill="#000084">
        <path d="M190 172h40l10 22h-50zM237 167h40l-15 30zM455 142h42l-14 24h-20zM52 303l25 20-25 22zM67 395h22v42H67zM238 437l24 20-24 20zM78 285l50-40 20 150-50-5zM150 230h50v40h-40zM90 360l50 20-10 60-60-30zM730 570h35v20h-35zM1045 455h40v12h-40z" />
        <path d="M130 182h55l-25 24 30 24h-55l22-24z" fill="#8c108c" stroke="#222" strokeWidth="2" />
      </g>
      <path d="M65 222h30v28H65zM175 250h30v28h-30zM100 440h75v18h-75zM168 400h24v30h-24zM220 388h50v28h-50z" fill="#f00" stroke="#111" strokeWidth="3" />
      <path d="M150 268l70-5 15 50-60 42q-30-30-25-87z" fill="#e6f4fb" />
      <g fill="#f00" stroke="#111" strokeWidth="3">
        {HOUSES.map(([x, y], i) => (
          <path key={i} d={`M${x - 24} ${y + 18}v-22l24-20 24 20v22z`} />
        ))}
      </g>
      {BALLS.map(([x, y, q, c], i) => (
        <g key={i} stroke="#0b3c08" strokeWidth="3">
          <circle cx={x} cy={y} r={q} fill={c} />
          {c === "#ff8c00" && <path d={`M${x - q * 0.7} ${y - q * 0.7}l${q * 1.4} ${q * 1.4}m0 ${-q * 1.4}l${-q * 1.4} ${q * 1.4}`} stroke="#553000" strokeWidth="2" />}
        </g>
      ))}
      <circle cx="688" cy="109" r="23" fill="#fff" stroke="#0b3c08" strokeWidth="10" />
      <circle cx="688" cy="109" r="23" fill="none" stroke="#2c9a2c" strokeWidth="5" />
      <g fill="#7fa9b8" stroke="#111" strokeWidth="3">
        {STRUCTURES.map(([x, y, w, h], i) => (
          <rect key={i} x={x} y={y} width={w} height={h} />
        ))}
      </g>
      <path d={BODY_PATH} fill="#ff0008" />
      <path d="M752 440l60 20 60 20 10 30-40 40-30 40-50-10-20-60z" fill="#12184a" />
      <g fill="#f00" stroke="#111" strokeWidth="3">
        {INNER_HOUSES.map(([x, y], i) => (
          <path key={i} d={`M${x - 20} ${y + 24}v-32l20-20 20 20v32z`} />
        ))}
      </g>
      {MAP.spots.map((s, i) => (
        <path key={i} d={s.d} fill={s.fill} stroke={s.stroke} strokeWidth={s.w} />
      ))}
      <path d={MAP.wedges} fill="#ff0008" />
      {TUFTS.map(([x, y], i) => (
        <path key={i} d={`M${x - 25} ${y + 22}l12-40 8 14 8-20 6 18 12-16 10 8-22 36-14 4z`} fill="#ff0008" stroke="#7a0000" strokeWidth="1" />
      ))}
      <g stroke="#111" strokeWidth="2">
        <path d="M845 382h42v24h-42z" fill="#b4f02c" />
        <path d="M520 238h16v16h-16z" fill="#087808" stroke="#20e820" strokeWidth="3" />
        <path d="M653 436h13v42h-13z" fill="#20d020" strokeWidth="1" />
        <path d="M556 252l18-2-2 16-12 8z" fill="#18c818" />
        <path d="M686 488h16v30h-16zM728 282h12v28h-12zM760 405h12v22h-12z" fill="#ffd000" strokeWidth="1" />
        <path d="M205 310l30-4-6 26-20 2z" fill="#b4e82c" strokeWidth="1" />
        <path d="M560 990l20-10-8 22zM718 1026h14v20h-14zM1062 190l14-6-4 12z" fill="#d0f028" strokeWidth="1" />
      </g>
    </svg>
  );
}

function ScaleBar() {
  return (
    <div className="absolute right-[88px] bottom-2.5 w-[154px] text-[12px] leading-4">
      <div className="mr-2 ml-2.5 flex h-[7px] border-r border-b border-black">
        <span className="flex-1 bg-black" /><span className="flex-1" /><span className="flex-1 bg-black" /><span className="flex-1" />
      </div>
      <div className="-mr-1 -ml-0.5 flex justify-between pt-0.5 [&>span]:w-6 [&>span]:text-center">
        <span>km</span><span>5</span><span>10</span><span>15</span><span>20</span>
      </div>
    </div>
  );
}

/* ---------- Settings ---------- */

function DateField({ id, value, className = "" }: { id: string; value: string; className?: string }) {
  return (
    <span className={`flex min-w-0 ${className}`}>
      <input id={id} defaultValue={value} className="w-0 min-w-0 flex-1 border border-r-0 border-[#a5a5ad] bg-white pr-1 text-right" />
      <button type="button" aria-label="Open calendar" className="flex w-6 shrink-0 items-center justify-center border border-[#707070] bg-[#dcdcdc]">
        <svg viewBox="0 0 10 7" className="h-[7px] w-2.5"><path d="M0 0l5 3 5-3v2L5 7 0 2z" /></svg>
      </button>
    </span>
  );
}

function Card({ title, className, children }: { title: string; className: string; children: React.ReactNode }) {
  return (
    <section className={`flex flex-col overflow-hidden rounded-t-md border-2 border-[#008fc5] bg-white ${className}`}>
      <h3 className="flex h-7 shrink-0 items-center bg-[#008fc5] pb-0.5 pl-[3px] text-white">{title}</h3>
      {children}
    </section>
  );
}

function RunRow({ id, label, children }: { id: string; label: string; children: React.ReactNode }) {
  return (
    <div className="flex h-[33px] items-center">
      <label htmlFor={id} className="w-24 shrink-0">{label}</label>
      <input
        type="checkbox"
        defaultChecked
        aria-label={`Override ${label}`}
        className="mr-[9px] flex h-[23px] w-14 shrink-0 appearance-none items-center rounded-[10px] border border-[#5db8dc] bg-[#008fc5] pr-[3px] before:ml-auto before:size-4 before:rounded-full before:bg-white"
      />
      {children}
    </div>
  );
}

function ModelBlock({ name, width }: { name: string; width: string }) {
  return (
    <div className="mb-[21px]">
      <div className="flex h-[26px] items-center gap-1.5"><b>{name}</b><span className="text-[10px]">(30 days 0 hours 0 minutes 0 seconds)</span></div>
      <div className="flex flex-col gap-[5px] pl-[9px]">
        <div className="flex h-[25px] items-center"><label htmlFor={name + "a"} className="w-[73px]">Start</label><DateField id={name + "a"} value="2020-06-01 00:00:00" className={`h-[25px] ${width}`} /></div>
        <div className="flex h-[25px] items-center"><label htmlFor={name + "b"} className="w-[73px]">Stop</label><DateField id={name + "b"} value="2020-07-01 00:00:00" className={`h-[25px] ${width}`} /></div>
        <div className="flex h-[25px] items-center"><label htmlFor={name + "c"} className="w-[73px]">Time step</label><input id={name + "c"} defaultValue="0d 00 : 01 : 00 .000" className={`h-[25px] border border-black bg-white pl-2.5 ${width}`} /></div>
      </div>
    </div>
  );
}

const softButton = "rounded-md border border-[#ededed] bg-linear-to-b from-[#d9d9d9] to-[#ebebeb]";

function Settings() {
  return (
    <section className="mx-[2px] mb-[3px] flex h-[391px] shrink-0 flex-col">
      <div className="flex h-[26px] shrink-0">
        <div className="flex w-[204px] items-center gap-1.5 border border-b-0 border-[#a8a8a8] pb-0.5 pl-[3px]">
          Integrated Model Settings
          <button type="button" aria-label="Close settings"><Cross /></button>
        </div>
        <div className="flex flex-1 items-center justify-end border-b border-[#a8a8a8] pr-1.5"><button type="button" aria-label="Tab list"><OverflowMark /></button></div>
      </div>
      <div className="flex min-h-0 flex-1 flex-col border border-t-0 border-[#a8a8a8] pt-[5px] pr-1 pb-1 pl-1">
        <div className="flex min-h-0 flex-1">
          <div className="flex min-w-0 flex-1 gap-[13px] overflow-hidden pt-[5px] pl-[5px]">
            <div className="flex w-[366px] shrink-0 flex-col gap-[13px]">
              <Card title="Run parameters" className="h-[203px] shrink-0 rounded-b-md">
                <div className="flex flex-col pt-[11px] pr-[13px] pl-5">
                  <RunRow id="start" label="Start time:"><DateField id="start" value="2020-06-01 00:00:00" className="h-7 flex-1" /></RunRow>
                  <RunRow id="stop" label="Stop time:"><DateField id="stop" value="2020-07-01 00:00:00" className="h-7 flex-1" /></RunRow>
                  <RunRow id="step" label="Time step:"><input id="step" defaultValue="0d 00 : 01 : 00 .000" className="h-[25px] min-w-0 flex-1 border border-black bg-white pl-2.5" /></RunRow>
                  <div className="flex h-8 items-center"><span className="w-[118px]">Duration:</span><span className="text-[11px]">30 days 0 hours 0 minutes 0 seconds</span></div>
                </div>
              </Card>
              <Card title="Spatial parameters" className="min-h-0 flex-1 rounded-b-md">
                <div className="flex flex-1 items-center justify-between pr-[15px] pb-2 pl-[13px]">
                  Coordinatesystem:
                  <button type="button" aria-label="Choose coordinate system" className={`h-[41px] w-[38px] ${softButton}`}>...</button>
                </div>
              </Card>
            </div>
            <Card title="Models" className="w-[382px] shrink-0 border-b-0">
              <div className="flex h-[242px] shrink-0 pr-2.5 pl-5">
                <div className="min-w-0 flex-1 overflow-hidden pt-3.5">
                  <ModelBlock name="CoupledTest1_DFM" width="w-[228px]" />
                  <ModelBlock name="CoupledTest1_RR" width="w-[215px]" />
                </div>
                <VScroll className="mt-[9px] mb-0.5" thumb="h-[96px]" />
              </div>
              <div className="flex gap-3 pt-3.5 pl-[19px]">
                <button type="button" className={`h-8 w-[75px] ${softButton}`}>Add ...</button>
                <button type="button" disabled className={`h-8 w-[75px] text-black opacity-50 ${softButton}`}>Delete</button>
              </div>
            </Card>
            <Card title="Workflows" className="w-[300px] shrink-0 border-b-0">
              <ul className="ml-[13px] flex-1 pt-[13px]">
                <li className="flex h-[25px] items-center border border-[#dcdcdc] bg-[#f4f4f4] pl-1.5">(RR + FlowFM)</li>
                <li className="flex h-[25px] items-center pl-[7px]">(RR)</li>
                <li className="flex h-[25px] items-center pl-[7px]">(FlowFM)</li>
              </ul>
              <button type="button" className={`mb-1 ml-3 h-8 w-[75px] ${softButton}`}>Run</button>
            </Card>
          </div>
          <VScroll className="mr-px mb-0.5 ml-px" thumb="h-[278px]" />
        </div>
        <div className="mb-px flex h-5 shrink-0 pt-px">
          <button type="button" aria-label="Scroll left" className="flex w-[22px] items-center justify-center border border-[#9f9a90]"><Tri dir="left" className="size-2" /></button>
          <div className="w-[677px] border border-[#9f9a90]" />
          <button type="button" aria-label="Scroll right" className="mr-0.5 ml-auto flex w-[22px] items-center justify-center border border-[#9f9a90]"><Tri dir="right" className="size-2" /></button>
          <div className="w-5 bg-[#efefef]" />
        </div>
      </div>
    </section>
  );
}

function Center() {
  return (
    <main className="flex min-w-0 flex-1 flex-col">
      <div className="flex h-[27px] shrink-0">
        <div className="flex w-[171px] items-center gap-1.5 border border-b-0 border-[#a8a8a8] pb-[3px] pl-0.5">
          <Icon name="globe" className="size-[19px]" />
          Integrated Model
          <button type="button" aria-label="Close map" className="ml-0.5"><Cross /></button>
        </div>
        <div className="flex flex-1 items-center justify-end border-b border-[#a8a8a8] pr-[5px]"><button type="button" aria-label="Tab list"><OverflowMark /></button></div>
      </div>
      <div className="flex min-h-0 flex-1 flex-col border border-t-0 border-[#a8a8a8]">
        <div className="relative min-h-0 flex-1 overflow-hidden">
          <MapDrawing />
          <ScaleBar />
        </div>
        <div className="flex h-2 shrink-0 items-start justify-center">
          <svg viewBox="0 0 116 6" className="h-1.5 w-[116px]" aria-hidden="true">
            <path d="M.5 0v6M115.500 0v6" stroke="#888" />
            <path d="M3 1h6L6 4zM107 1h6l-3 3z" fill="#666" />
            <path d="M14 3h88" stroke="#888" strokeWidth="3" strokeDasharray="1 1" />
          </svg>
        </div>
        <Settings />
      </div>
    </main>
  );
}

/* ---------- Map contents panel ---------- */

type Layer = { label: string; depth: number; state?: "open" | "closed"; selected?: boolean };
const LAYERS: Layer[] = [
  { label: "Map", depth: 0, state: "open" },
  { label: "Integrated Model", depth: 1, state: "open" },
  { label: "Region", depth: 2, state: "open" },
  { label: "Area", depth: 3, state: "closed" },
  { label: "network", depth: 3, state: "open" },
  { label: "Nodes", depth: 4, state: "closed" },
  { label: "Branches", depth: 4 },
  { label: "Bridges", depth: 4 },
  { label: "Compound Structures", depth: 4 },
  { label: "Cross Sections", depth: 4, selected: true },
  { label: "Culverts", depth: 4 },
  { label: "Extra Resistances", depth: 4 },
  { label: "Lateral Sources", depth: 4 },
  { label: "Compartments", depth: 4 },
  { label: "Manholes", depth: 4 },
  { label: "Observation Points", depth: 4 },
  { label: "Orifices", depth: 4 },
  { label: "Outlets", depth: 4 },
  { label: "Pipes", depth: 4, state: "closed" },
  { label: "Pumps", depth: 4 },
  { label: "Retentions", depth: 4 },
  { label: "Routes", depth: 4 },
  { label: "Sewer Connections", depth: 4, state: "closed" },
  { label: "Weirs", depth: 4 },
  { label: "Basin", depth: 3, state: "closed" },
  { label: "Links Region", depth: 3 },
  { label: "CoupledTest1_DFM", depth: 2, state: "closed" },
];
const INDENT = ["pl-3", "pl-9", "pl-[60px]", "pl-[84px]", "pl-[108px]"];

function LayerRow({ layer }: { layer: Layer }) {
  return (
    <li className={`flex items-center ${INDENT[layer.depth]}`}>
      <span className="flex w-[15px] shrink-0">
        {layer.state && (
          <button type="button" aria-label={`Toggle ${layer.label}`}>
            <svg viewBox="0 0 10 12" className="h-3 w-2.5">
              {layer.state === "open" ? <path d="M8.500 2v7.500H1z" fill="#555" stroke="#222" /> : <path d="M2.500 1.500v9L7 6z" fill="#fff" stroke="#a0a0a0" />}
            </svg>
          </button>
        )}
      </span>
      <label className={`flex h-full items-center gap-2 pr-1 pl-[7px] ${layer.selected ? "bg-[#efefef]" : ""}`}>
        {layer.depth === 0 ? (
          <Icon name="wireGlobe" className="-mr-1 ml-[-2px] size-5" />
        ) : (
          <span className="relative size-[17px]">
            <input type="checkbox" defaultChecked className="block size-[17px] appearance-none border border-[#666] bg-white" />
            <svg viewBox="0 0 17 17" className="pointer-events-none absolute inset-0 size-[17px]"><path d="M4 8.500l3 4L13 4" fill="none" stroke="#1a1a1a" strokeWidth="2.600" /></svg>
          </span>
        )}
        {layer.label}
      </label>
    </li>
  );
}

function MapPanel() {
  const bottomTab = "border border-[#a8a8a8] bg-linear-to-b from-[#efefef] to-[#e2e2e2] h-[27px] pb-px";
  return (
    <aside className="flex w-[547px] shrink-0 flex-col">
      <div className="flex min-h-0 flex-1 flex-col border border-r-0 border-[#a8a8a8] bg-white">
        <PanelHeader title="Map" pad="pr-2.5" />
        <div className="mr-1 ml-[3px] flex h-[29px] shrink-0 items-center bg-[#efefef]">
          <button type="button" aria-label="Add layer" className="flex h-[29px] w-[30px] items-center justify-center border border-[#888] bg-[#dcdcdc]"><Icon name="shapeAdd" /></button>
          <button type="button" aria-label="Add background" className="flex h-[29px] w-[30px] items-center justify-center border border-[#888] bg-[#dcdcdc]"><Icon name="worldAdd" /></button>
          <button type="button" aria-label="Remove layer" className="flex h-[29px] w-[30px] items-center justify-center border border-[#c0c8cc] bg-[#f2f2f2]"><Icon name="shapeRemove" /></button>
          <button type="button" aria-label="Restore layers" className="flex h-[29px] w-[30px] items-center justify-center border border-[#c0c8cc] bg-[#f2f2f2]"><Icon name="shapeUndo" /></button>
          <label className="ml-2 flex items-center gap-[7px]"><input type="checkbox" className="size-[17px] appearance-none border border-[#666] bg-white" />Use focused layer</label>
        </div>
        <div className="flex min-h-0 flex-1">
          <div className="mb-[3px] min-w-0 flex-1 overflow-hidden">
            <ul className="grid h-[740px] auto-rows-fr">{LAYERS.map((l) => <LayerRow key={l.label} layer={l} />)}</ul>
          </div>
          <VScroll className="mt-0.5 mr-[5px] mb-1" thumb="h-[655px]" />
        </div>
      </div>
      <div className="flex h-[30px] shrink-0 pl-0.5">
        <button type="button" className={`w-[53px] ${bottomTab}`}>Chart</button>
        <button type="button" className={`-ml-px w-[65px] ${bottomTab}`}>Region</button>
        <button type="button" className="relative -mt-px -ml-px h-[29px] w-[47px] border border-t-0 border-[#a8a8a8] bg-white">Map</button>
        <button type="button" className={`-ml-px w-[92px] ${bottomTab}`}>Operations</button>
        <button type="button" className={`-ml-px w-[68px] ${bottomTab}`}>Toolbox</button>
      </div>
    </aside>
  );
}

export default function App() {
  return (
    <div className="flex h-screen flex-col overflow-hidden bg-white font-['Open_Sans','Noto_Sans',sans-serif] text-[14px] leading-5 whitespace-nowrap text-black">
      <TitleBar />
      <Ribbon />
      <div className="flex min-h-0 flex-1 gap-2 pt-px">
        <div className="flex w-[389px] shrink-0 flex-col gap-2.5 pb-0.5">
          <ProjectPanel />
          <PropertiesPanel />
        </div>
        <Center />
        <MapPanel />
      </div>
      <footer className="h-[27px] shrink-0 bg-[#2a569a]" />
    </div>
  );
}
